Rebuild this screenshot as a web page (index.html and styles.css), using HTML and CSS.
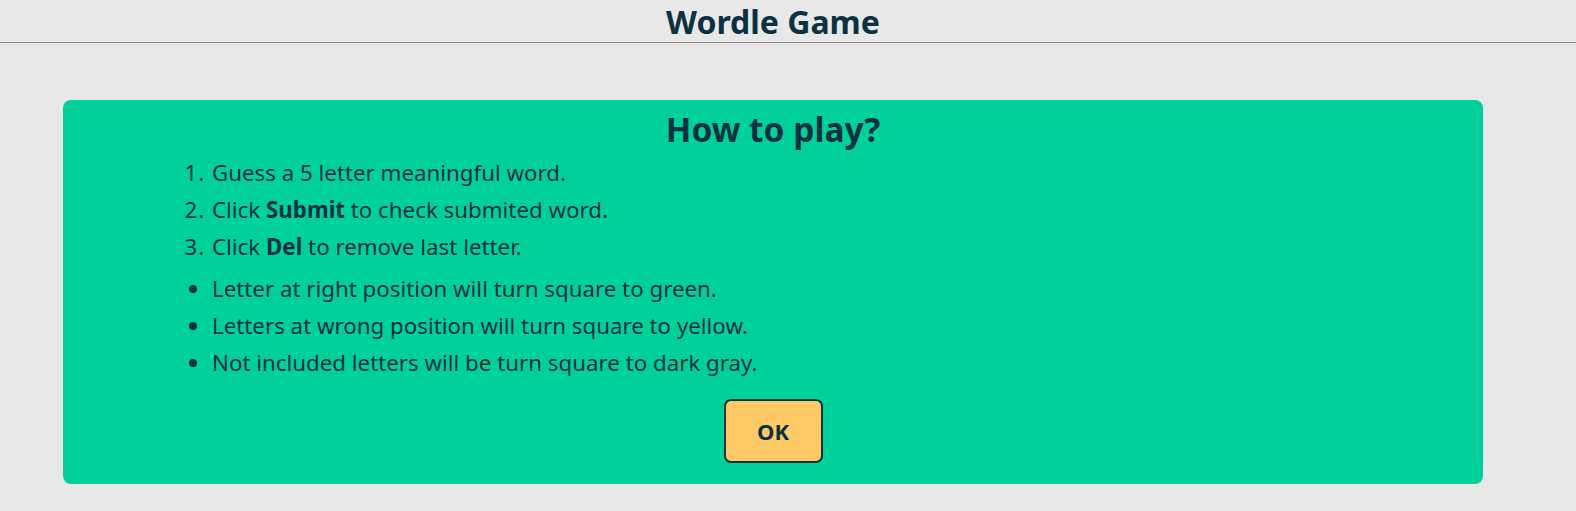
FILE: index.html
```html
<!DOCTYPE html>
<html>
<head>
<meta charset="utf-8">
<link rel="stylesheet" href="styles.css">
</head>
<body>
<header class="top">
  <h1 class="top-title">Wordle Game</h1>
</header>
<main class="page">
  <section class="card">
    <h2 class="card-title">How to play?</h2>
    <ol class="steps">
      <li>Guess a 5 letter meaningful word.</li>
      <li>Click <b>Submit</b> to check submited word.</li>
      <li>Click <b>Del</b> to remove last letter.</li>
    </ol>
    <ul class="rules">
      <li>Letter at right position will turn square to green.</li>
      <li>Letters at wrong position will turn square to yellow.</li>
      <li>Not included letters will be turn square to dark gray.</li>
    </ul>
    <div class="actions">
      <button class="ok">OK</button>
    </div>
  </section>
</main>
</body>
</html>
```
FILE: styles.css
```css
html, body {
  margin: 0;
  padding: 0;
  background: #e8e8e8;
  font-family: "Noto Sans", "DejaVu Sans", sans-serif;
  color: #0b3142;
}
.top {
  height: 42px;
  border-bottom: 1px solid #8a8a8a;
  padding-right: 30px;
  display: flex;
  align-items: center;
  justify-content: center;
}
.top-title {
  margin: 0;
  font-size: 32px;
  font-weight: 700;
  line-height: 44px;
  position: relative;
  top: 1px;
}
.page {
  padding-top: 57px;
  padding-left: 63px;
}
.card {
  width: 1420px;
  box-sizing: border-box;
  background: #00d19b;
  border-radius: 8px;
  padding: 7px 0 21px;
}
.card-title {
  margin: 0;
  text-align: center;
  font-size: 33.5px;
  font-weight: 700;
  line-height: 44px;
}
.steps, .rules {
  margin: 0;
  padding-left: 149px;
  font-size: 22.3px;
  line-height: 37px;
}
.steps {
  margin-top: 3px;
}
.rules {
  margin-top: 5px;
}
.steps li::marker {
  letter-spacing: 1px;
}
.steps b {
  font-weight: 700;
}
.actions {
  display: flex;
  justify-content: center;
  margin-top: 18px;
}
.ok {
  width: 99px;
  height: 64px;
  background: #ffc966;
  border: 2px solid #0b3142;
  border-radius: 7px;
  font-family: "Noto Sans", "DejaVu Sans", sans-serif;
  font-size: 22px;
  font-weight: 700;
  color: #0b3142;
  cursor: pointer;
}
```
